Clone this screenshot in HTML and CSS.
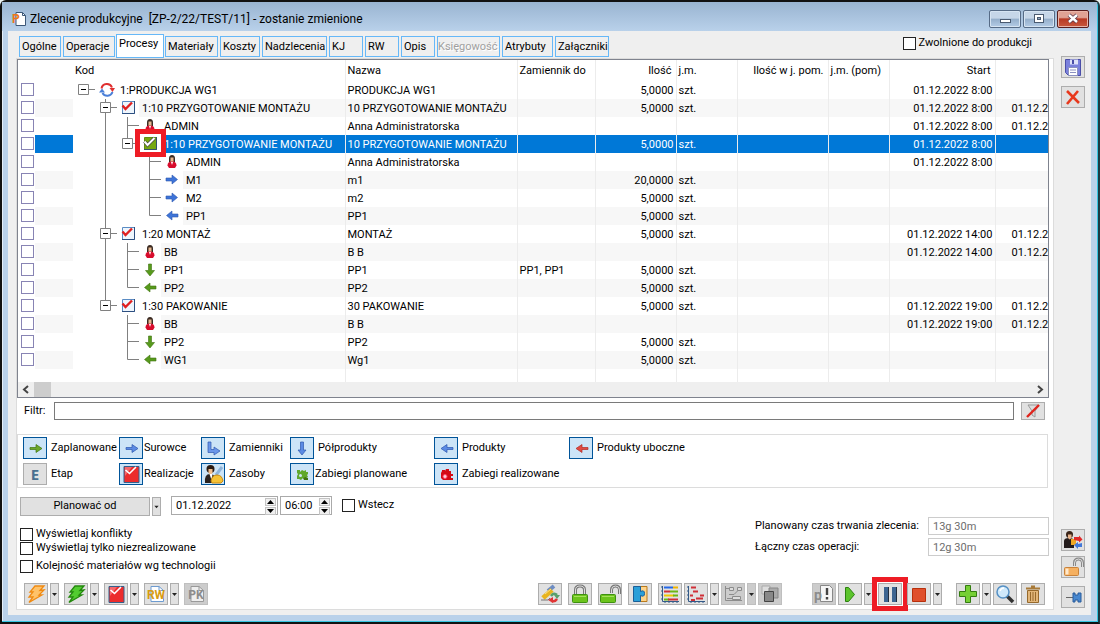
FILE: index.html
```html
<!DOCTYPE html>
<html lang="pl">
<head>
<meta charset="utf-8">
<title>Zlecenie produkcyjne</title>
<link rel="stylesheet" href="styles.css">
</head>
<body>
<svg class="sprite" aria-hidden="true">
  <!-- tree connectors -->
  <symbol id="t-v" viewBox="0 0 22 18"><path d="M10.5 0V18" stroke="#808080" fill="none"/></symbol>
  <symbol id="t-tee" viewBox="0 0 22 18"><path d="M10.5 0V18M10.5 8.5H22" stroke="#808080" fill="none"/></symbol>
  <symbol id="t-end" viewBox="0 0 22 18"><path d="M10.5 0V8.5H22" stroke="#808080" fill="none"/></symbol>
  <symbol id="t-root" viewBox="0 0 22 18"><path d="M10 8.5H22" stroke="#808080"/><path d="M5.500 3.500h10v10h-10z" fill="#fff" stroke="#808080"/><path d="M8 8.500h5" stroke="#000"/></symbol>
  <symbol id="t-mid" viewBox="0 0 22 18"><path d="M10.5 0V18M10 8.5H22" stroke="#808080"/><path d="M5.500 3.500h10v10h-10z" fill="#fff" stroke="#808080"/><path d="M8 8.500h5" stroke="#000"/></symbol>
  <symbol id="t-last" viewBox="0 0 22 18"><path d="M10.5 0V8M10 8.5H22" stroke="#808080"/><path d="M5.500 3.500h10v10h-10z" fill="#fff" stroke="#808080"/><path d="M8 8.500h5" stroke="#000"/></symbol>
  <!-- row icons -->
  <symbol id="r-cycle" viewBox="0 0 22 18"><path d="M6.500 7.500A5.500 5.500 0 0 1 17 6.500" stroke="#e03030" stroke-width="2" fill="none"/><path d="M14.500 7h5.500l-2.500 4z" fill="#e03030"/><path d="M17.500 11A5.500 5.500 0 0 1 7.500 12" stroke="#4a7fd8" stroke-width="2" fill="none"/><path d="M4 11.500h6L7 7.500z" fill="#4a7fd8"/></symbol>
  <symbol id="r-task" viewBox="0 0 22 18"><path d="M5.500 2.500h12v12h-12z" fill="#eef6fd" stroke="#5b8cc4"/><path d="M5 14.500h12.500V2" stroke="#2d4f80" fill="none"/><path d="M5.500 6.500l3 3.500 6.500-6.500" stroke="#e02020" stroke-width="2.400" fill="none"/></symbol>
  <symbol id="r-done" viewBox="0 0 22 18"><path d="M5.500 2.500h12v12h-12z" fill="#76a810" stroke="#5f8d10"/><path d="M5 14.500h12.500V2" stroke="#35506e" fill="none"/><path d="M5.500 6.500l3 3.500 7-7" stroke="#444" stroke-width="3.400" fill="none"/><path d="M5.500 6.500l3 3.500 7-7" stroke="#fff" stroke-width="2" fill="none"/></symbol>
  <symbol id="r-user" viewBox="0 0 22 18"><path d="M8 9V5.500q0-3.500 3-3.500t3 3.500V9z" fill="#3a2a22"/><path d="M9.500 4.500h3V9h-3z" fill="#e8b890"/><path d="M6.500 12.500q0-4 4.500-4t4.500 4L14 15H8z" fill="#d80c2c"/><path d="M10 9h2l-1 3z" fill="#fff"/></symbol>
  <symbol id="r-right" viewBox="0 0 22 18"><path d="M5 7h6V4l5.500 4.500L11 13v-3H5z" fill="#3e74d8" stroke="#2d57ae" stroke-width=".6"/></symbol>
  <symbol id="r-left" viewBox="0 0 22 18"><path d="M17 7h-6V4L5.500 8.500 11 13v-3h6z" fill="#3e74d8" stroke="#2d57ae" stroke-width=".6"/></symbol>
  <symbol id="g-left" viewBox="0 0 22 18"><path d="M17 7h-6V4L5.500 8.500 11 13v-3h6z" fill="#579a1c" stroke="#3f7410" stroke-width=".6"/></symbol>
  <symbol id="g-down" viewBox="0 0 22 18"><path d="M9.500 3v6.500H6.500L11 15l4.500-5.500h-3V3z" fill="#579a1c" stroke="#3f7410" stroke-width=".6"/></symbol>
  <!-- legend icons -->
  <symbol id="l-right-g" viewBox="0 0 22 20"><path d="M6 9.500h6v-3l6 4-6 4v-3H6z" fill="#6aa82c" stroke="#3f7410" stroke-width=".7"/></symbol>
  <symbol id="l-right" viewBox="0 0 22 20"><path d="M6 9.500h6v-3l6 4-6 4v-3H6z" fill="#5a8ae4" stroke="#2d57ae" stroke-width=".7"/></symbol>
  <symbol id="l-turn" viewBox="0 0 22 20"><path d="M6 4h3v7.500h3V9l6 4-6 4v-2.500H6z" fill="#6a96ea" stroke="#2d57ae" stroke-width=".7"/></symbol>
  <symbol id="l-down" viewBox="0 0 22 20"><path d="M9.500 4v8H7l4 5 4-5h-2.500V4z" fill="#5a8ae4" stroke="#2d57ae" stroke-width=".7"/></symbol>
  <symbol id="l-left" viewBox="0 0 22 20"><path d="M18 9.500h-6v-3l-6 4 6 4v-3h6z" fill="#5a8ae4" stroke="#2d57ae" stroke-width=".7"/></symbol>
  <symbol id="l-left-r" viewBox="0 0 22 20"><path d="M18 9.500h-6v-3l-6 4 6 4v-3h6z" fill="#e04a42" stroke="#b02a24" stroke-width=".7"/></symbol>
  <symbol id="l-gear-g" viewBox="0 0 22 20"><path d="M6 6h3v2l2-2 2 1 2-1v2h2v2l-1 1 1 2h-2v2l-3-1-2 2-2-1H6v-3l1-2-1-1z" fill="#5fa82c"/><circle cx="9.500" cy="11.500" r="1.500" fill="#cfe5f7"/><path d="M12 14l3-1 2 1v2h-4z" fill="#3f7410"/></symbol>
  <symbol id="l-gear-r" viewBox="0 0 22 20"><path d="M7 7V6h3v1l1-2h3v2h2v3h2v2h-2v2h2v2H8l-2-2V9z" fill="#d40a14"/><circle cx="10" cy="12.500" r="2" fill="#fbd3da" stroke="#ff4468"/></symbol>
  <symbol id="l-hat" viewBox="0 0 22 20"><path d="M3 19q-1-9 5-9t7 9z" fill="#2b2320"/><circle cx="8.500" cy="5" r="4" fill="#2b1c14"/><path d="M6.500 5h4v4l-2 2-2-2z" fill="#f0bd8c"/><path d="M7.500 10h3l-1 6z" fill="#fff"/><path d="M20 3l-6 8" stroke="#8fb4da" stroke-width="3"/><path d="M9 17q1-6 6-6t6 6l-2 2h-9z" fill="#f5c236" stroke="#c98a10"/></symbol>
  <symbol id="i-redcheck" viewBox="0 0 22 20"><path d="M4 2.500h15v16H4z" fill="#ec2c2c" stroke="#34608c"/><path d="M5 3h7L5 12z" fill="#f5686c"/><path d="M5.500 6l4 3.500L16 3" stroke="#fff" stroke-width="1.600" fill="none"/></symbol>
  <!-- toolbar icons -->
  <symbol id="i-bolt-o" viewBox="0 0 22 20"><path d="M10 2h9l-4 4.500 4-.500-5 5h3L4 18.500l4-5.500H4l4-5H5z" fill="#ffc36a" stroke="#f08a12" stroke-width="1.300"/></symbol>
  <symbol id="i-bolt-g" viewBox="0 0 22 20"><path d="M10 2h9l-4 4.500 4-.500-5 5h3L4 18.500l4-5.500H4l4-5H5z" fill="#52cc30" stroke="#24880e" stroke-width="1.300"/></symbol>
  <symbol id="i-sheet" viewBox="0 0 22 20"><path d="M6 2.500h8l4.500 4v11H6z" fill="#fff" stroke="#6d9bd0"/><path d="M14 2.500v4h4.500" fill="none" stroke="#6d9bd0"/></symbol>
  <symbol id="i-sheet-off" viewBox="0 0 22 20"><path d="M6 2.500h8l4.500 4v11H6z" fill="#eee" stroke="#999"/><path d="M14 2.500v4h4.500" fill="none" stroke="#999"/></symbol>
  <symbol id="i-sync" viewBox="0 0 22 20"><path d="M9 7l6-5" stroke="#6d8cc2" stroke-width="4"/><path d="M4 14l9-8" stroke="#e8b41e" stroke-width="5"/><path d="M6 10l6-5" stroke="#fbe08a"/><path d="M2 16h7l2-2" stroke="#777" fill="none"/><path d="M12 12q3-4 6-1" stroke="#5aa06c" stroke-width="2.500" fill="none"/><path d="M15 11h6l-3 4z" fill="#5aa06c"/><path d="M18 15q-2 3-5 2" stroke="#e03434" stroke-width="2.500" fill="none"/><path d="M14 13v6l-5-3z" fill="#e03434"/></symbol>
  <symbol id="i-lock" viewBox="0 0 22 20"><path d="M6.500 11V6q0-4 4.500-4t4.500 4v5" fill="none" stroke="#777" stroke-width="3"/><path d="M6.500 11V6q0-4 4.500-4t4.500 4v5" fill="none" stroke="#ddd"/><rect x="3.500" y="10.500" width="15" height="8" rx="1" fill="#6cc41c" stroke="#3e9010"/><path d="M5 12.500h12" stroke="#a4e05c"/></symbol>
  <symbol id="i-unlock" viewBox="0 0 22 20"><path d="M12.500 9V6q0-4 4-4t4 4v4" fill="none" stroke="#777" stroke-width="3"/><path d="M12.500 9V6q0-4 4-4t4 4v4" fill="none" stroke="#ddd"/><rect x="1.500" y="10.500" width="15" height="8" rx="1" fill="#6cc41c" stroke="#3e9010"/><path d="M3 12.500h12" stroke="#a4e05c"/></symbol>
  <symbol id="i-unlock-o" viewBox="0 0 22 20"><path d="M12.500 9V6q0-4 4-4t4 4v4" fill="none" stroke="#888" stroke-width="3"/><path d="M12.500 9V6q0-4 4-4t4 4v4" fill="none" stroke="#ddd"/><rect x="2.500" y="10.500" width="14" height="8" rx="1" fill="#f5b060" stroke="#c9823a"/><path d="M5 11.500v6" stroke="#ffe9cc" stroke-width="3"/></symbol>
  <symbol id="i-puzzle" viewBox="0 0 22 20"><path d="M11 2.500h7v15h-7z" fill="#ffd48a" stroke="#b8791c"/><path d="M4.500 2.500h7v5q4-2 4 2t-4 2v6h-7z" fill="#2a9fd8" stroke="#1a5f98"/></symbol>
  <symbol id="i-gantt" viewBox="0 0 22 20"><path d="M3.500 2v15.500H20" stroke="#345a88" fill="none"/><path d="M5 3.500h9" stroke="#2468e8" stroke-width="2"/><path d="M14 3.500h5" stroke="#f0b400" stroke-width="2"/><path d="M5 7.500h6" stroke="#d03038" stroke-width="2"/><path d="M11 7.500h8" stroke="#6cb814" stroke-width="2"/><path d="M5 11.500h10" stroke="#f0c800" stroke-width="2"/><path d="M14 11.500h5" stroke="#6cb814" stroke-width="2"/><path d="M5 15.500h5" stroke="#6cb814" stroke-width="2"/><path d="M9 15.500h10" stroke="#d03038" stroke-width="2"/><path d="M2 3h2M2 7h2M2 11h2M2 15h2M6 19v-2M10 19v-2M14 19v-2M18 19v-2" stroke="#345a88"/></symbol>
  <symbol id="i-scatter" viewBox="0 0 22 20"><path d="M3.500 2v15.500H20M2 3h2M2 7h2M2 11h2M2 15h2M6 19v-2M10 19v-2M14 19v-2M18 19v-2" stroke="#345a88" fill="none"/><path d="M6 3.500h5M8 7.500h5M15 11.500h4M5 11.500h3M11 14.500h7M6 16h4" stroke="#d03038" stroke-width="2"/></symbol>
  <symbol id="i-graph" viewBox="0 0 22 20"><path d="M3.500 2v14.500H20" stroke="#8c8c8c" fill="none"/><path d="M4 4.500h3M7 10.500h5l5-5M5 14.500h5" stroke="#8c8c8c" fill="none"/><path d="M7.500 3.500h4v3h-4zM15.500 3.500h4v3h-4zM10.500 12.500h8v3h-8z" fill="#ddd" stroke="#8c8c8c"/></symbol>
  <symbol id="i-stack" viewBox="0 0 22 20"><path d="M3 2h8v8H3z" fill="#ddd" stroke="#aaa"/><path d="M10 4h9v10h-9z" fill="#aaa" stroke="#888"/><path d="M5.500 7.500h9v10h-9z" fill="#888" stroke="#444"/></symbol>
  <symbol id="i-note" viewBox="0 0 22 20"><path d="M7.500 1.500h9l3 3v13h-12z" fill="#f6f6f6" stroke="#888"/><path d="M14 4v7M14 13v2.500" stroke="#444" stroke-width="2.400"/></symbol>
  <symbol id="i-play" viewBox="0 0 22 20"><path d="M6.500 3.500h3l6 7-6 7h-3z" fill="#5cc42c" stroke="#2c8010"/></symbol>
  <symbol id="i-pause" viewBox="0 0 22 20"><path d="M5 3h4v15H5zM13 3h4v15h-4z" fill="#3d6591"/><path d="M9.500 3v15M17.500 3v15" stroke="#222f40"/></symbol>
  <symbol id="i-stop" viewBox="0 0 22 20"><path d="M4.500 4.500h13v13h-13z" fill="#e0502c" stroke="#b8300c"/></symbol>
  <symbol id="i-plus" viewBox="0 0 22 20"><path d="M8.500 1.500h5v6h6v5h-6v6h-5v-6h-6v-5h6z" fill="#76cf35" stroke="#347c10"/></symbol>
  <symbol id="i-find" viewBox="0 0 22 20"><path d="M13 12l6 6" stroke="#333" stroke-width="3.500"/><circle cx="9" cy="8" r="6" fill="#cfe9fb" stroke="#5590c4" stroke-width="1.500"/><path d="M6 7q1-3 4-3" stroke="#fff" stroke-width="1.500" fill="none"/></symbol>
  <symbol id="i-bin" viewBox="0 0 22 20"><path d="M5.500 6.500h11v12h-11z" fill="#e2b67a" stroke="#96692c"/><path d="M4 4.500h14M9 2.500h4" stroke="#a87a38" stroke-width="2"/><path d="M8.500 8v9M11 8v9M13.500 8v9" stroke="#96692c"/></symbol>
  <symbol id="i-save" viewBox="0 0 22 20"><path d="M3.500 2.500h15v16h-12l-3-3z" fill="#7a80dc" stroke="#4a4ea8"/><path d="M8 2.500h8v5H8z" fill="#dfe2f8"/><path d="M10 3h2v4h-2z" fill="#4a4ea8"/><path d="M6.500 10.500h9v8h-9z" fill="#fff" stroke="#8a90c0"/><path d="M8 13h6M8 15.500h6" stroke="#8a90c0"/></symbol>
  <symbol id="i-cross" viewBox="0 0 22 20"><path d="M5 4L17 16M16 4L5 17" stroke="#e8381c" stroke-width="2.600"/></symbol>
  <symbol id="i-people" viewBox="0 0 22 20"><path d="M2 18V11q0-3 5-3t5 3v7z" fill="#241c1c"/><circle cx="7.500" cy="4.500" r="3.500" fill="#3a2418"/><path d="M6 4.500h3.500V8L7.500 9.500 6 8z" fill="#eab58c"/><path d="M9 9h5v6H9z" fill="#f0a824"/><path d="M12 10V7h5V5.500l3.500 4-3.500 3V11z" fill="#e02828"/><path d="M20 13v4h-4v2l-4-4 4-3v2z" fill="#4278d8"/></symbol>
  <symbol id="i-pin" viewBox="0 0 22 20"><path d="M4 10.500h8" stroke="#666"/><path d="M11 6h2v2h3V6h3v9h-3v-2h-3v2h-2z" fill="#4888d0" stroke="#285c9c"/></symbol>
  <symbol id="i-funnel" viewBox="0 0 22 16"><path d="M6 2h11l-4 6v6l-3-2V8z" fill="#ddd" stroke="#999"/><path d="M5 14L17 2" stroke="#e0241c" stroke-width="2.400"/></symbol>
  <symbol id="i-caret" viewBox="0 0 7 20"><path d="M1 9h5L3.500 12z" fill="#222"/></symbol>
  <symbol id="i-app" viewBox="0 0 14 14"><path d="M4 .500h6.500l3 3v10H4z" fill="#fff" stroke="#3d5878"/><path d="M10.500.500v3h3" fill="none" stroke="#3d5878"/></symbol>
</svg>

<div class="window">
  <header class="titlebar">
    <span class="app-icon"><svg><use href="#i-app"/></svg><b>P</b></span>
    <h1>Zlecenie produkcyjne&nbsp; [ZP-2/22/TEST/11] - zostanie zmienione</h1>
    <div class="caption">
      <button aria-label="Minimalizuj"><svg viewBox="0 0 12 12"><rect x="1.500" y="6.500" width="10" height="3" fill="#fff" stroke="#4a5a70"/></svg></button>
      <button aria-label="Maksymalizuj"><svg viewBox="0 0 12 12"><rect x="1.500" y="1.500" width="9" height="8" fill="#fff" stroke="#4a5a70"/><rect x="4.500" y="4.500" width="3" height="2" fill="#8fa8c4" stroke="#4a5a70"/></svg></button>
      <button class="close" aria-label="Zamknij"><svg viewBox="0 0 12 12"><path d="M2 2l8 7M10 2L2 9" stroke="#59384a" stroke-width="4"/><path d="M2 2l8 7M10 2L2 9" stroke="#fff" stroke-width="2.400"/></svg></button>
    </div>
  </header>

  <div class="client">
    <main>
      <div class="tabrow">
        <nav class="tabs">
          <button>Ogólne</button><button>Operacje</button><button class="active">Procesy</button><button>Materiały</button><button>Koszty</button><button>Nadzlecenia</button><button>KJ</button><button>RW</button><button>Opis</button><button disabled>Księgowość</button><button>Atrybuty</button><button>Załączniki</button>
        </nav>
        <label class="check"><input type="checkbox"><span>Zwolnione do produkcji</span></label>
      </div>

      <section class="panel">
        <div class="grid">
          <table>
            <colgroup><col class="c-check"><col class="c-flag"><col class="c-code"><col class="c-name"><col class="c-sub"><col class="c-qty"><col class="c-unit"><col class="c-qty2"><col class="c-unit2"><col class="c-start"><col></colgroup>
            <thead><tr><th></th><th></th><th class="code">Kod</th><th>Nazwa</th><th>Zamiennik do</th><th class="num">Ilość</th><th>j.m.</th><th class="num">Ilość w j. pom.</th><th>j.m. (pom)</th><th class="num">Start</th><th class="end"></th></tr></thead>
            <tbody>
              <tr><td><input type="checkbox" aria-label="Wiersz 1"></td><td></td><td><div class="node"><svg><use href="#t-root"/></svg><svg><use href="#r-cycle"/></svg><span>1:PRODUKCJA WG1</span></div></td><td>PRODUKCJA WG1</td><td></td><td class="num">5,0000</td><td>szt.</td><td></td><td></td><td class="num">01.12.2022 8:00</td><td class="end"></td></tr>
              <tr><td><input type="checkbox" aria-label="Wiersz 2"></td><td></td><td><div class="node"><i></i><svg><use href="#t-mid"/></svg><svg><use href="#r-task"/></svg><span>1:10 PRZYGOTOWANIE MONTAŻU</span></div></td><td>10 PRZYGOTOWANIE MONTAŻU</td><td></td><td class="num">5,0000</td><td>szt.</td><td></td><td></td><td class="num">01.12.2022 8:00</td><td class="end">01.12.2022</td></tr>
              <tr><td><input type="checkbox" aria-label="Wiersz 3"></td><td></td><td><div class="node"><i></i><svg><use href="#t-v"/></svg><svg><use href="#t-tee"/></svg><svg><use href="#r-user"/></svg><span>ADMIN</span></div></td><td>Anna Administratorska</td><td></td><td></td><td></td><td></td><td></td><td class="num">01.12.2022 8:00</td><td class="end">01.12.2022</td></tr>
              <tr class="selected"><td><input type="checkbox" aria-label="Wiersz 4"></td><td></td><td><div class="node"><i></i><svg><use href="#t-v"/></svg><svg><use href="#t-last"/></svg><b class="marked"><svg><use href="#r-done"/></svg></b><span>1:10 PRZYGOTOWANIE MONTAŻU</span></div></td><td>10 PRZYGOTOWANIE MONTAŻU</td><td></td><td class="num">5,0000</td><td>szt.</td><td></td><td></td><td class="num">01.12.2022 8:00</td><td class="end"></td></tr>
              <tr><td><input type="checkbox" aria-label="Wiersz 5"></td><td></td><td><div class="node"><i></i><svg><use href="#t-v"/></svg><i></i><svg><use href="#t-tee"/></svg><svg><use href="#r-user"/></svg><span>ADMIN</span></div></td><td>Anna Administratorska</td><td></td><td></td><td></td><td></td><td></td><td class="num">01.12.2022 8:00</td><td class="end"></td></tr>
              <tr><td><input type="checkbox" aria-label="Wiersz 6"></td><td></td><td><div class="node"><i></i><svg><use href="#t-v"/></svg><i></i><svg><use href="#t-tee"/></svg><svg><use href="#r-right"/></svg><span>M1</span></div></td><td>m1</td><td></td><td class="num">20,0000</td><td>szt.</td><td></td><td></td><td></td><td class="end"></td></tr>
              <tr><td><input type="checkbox" aria-label="Wiersz 7"></td><td></td><td><div class="node"><i></i><svg><use href="#t-v"/></svg><i></i><svg><use href="#t-tee"/></svg><svg><use href="#r-right"/></svg><span>M2</span></div></td><td>m2</td><td></td><td class="num">5,0000</td><td>szt.</td><td></td><td></td><td></td><td class="end"></td></tr>
              <tr><td><input type="checkbox" aria-label="Wiersz 8"></td><td></td><td><div class="node"><i></i><svg><use href="#t-v"/></svg><i></i><svg><use href="#t-end"/></svg><svg><use href="#r-left"/></svg><span>PP1</span></div></td><td>PP1</td><td></td><td class="num">5,0000</td><td>szt.</td><td></td><td></td><td></td><td class="end"></td></tr>
              <tr><td><input type="checkbox" aria-label="Wiersz 9"></td><td></td><td><div class="node"><i></i><svg><use href="#t-mid"/></svg><svg><use href="#r-task"/></svg><span>1:20 MONTAŻ</span></div></td><td>MONTAŻ</td><td></td><td class="num">5,0000</td><td>szt.</td><td></td><td></td><td class="num">01.12.2022 14:00</td><td class="end">01.12.2022</td></tr>
              <tr><td><input type="checkbox" aria-label="Wiersz 10"></td><td></td><td><div class="node"><i></i><svg><use href="#t-v"/></svg><svg><use href="#t-tee"/></svg><svg><use href="#r-user"/></svg><span>BB</span></div></td><td>B B</td><td></td><td></td><td></td><td></td><td></td><td class="num">01.12.2022 14:00</td><td class="end">01.12.2022</td></tr>
              <tr><td><input type="checkbox" aria-label="Wiersz 11"></td><td></td><td><div class="node"><i></i><svg><use href="#t-v"/></svg><svg><use href="#t-tee"/></svg><svg><use href="#g-down"/></svg><span>PP1</span></div></td><td>PP1</td><td>PP1, PP1</td><td class="num">5,0000</td><td>szt.</td><td></td><td></td><td></td><td class="end"></td></tr>
              <tr><td><input type="checkbox" aria-label="Wiersz 12"></td><td></td><td><div class="node"><i></i><svg><use href="#t-v"/></svg><svg><use href="#t-end"/></svg><svg><use href="#g-left"/></svg><span>PP2</span></div></td><td>PP2</td><td></td><td class="num">5,0000</td><td>szt.</td><td></td><td></td><td></td><td class="end"></td></tr>
              <tr><td><input type="checkbox" aria-label="Wiersz 13"></td><td></td><td><div class="node"><i></i><svg><use href="#t-last"/></svg><svg><use href="#r-task"/></svg><span>1:30 PAKOWANIE</span></div></td><td>30 PAKOWANIE</td><td></td><td class="num">5,0000</td><td>szt.</td><td></td><td></td><td class="num">01.12.2022 19:00</td><td class="end">01.12.2022</td></tr>
              <tr><td><input type="checkbox" aria-label="Wiersz 14"></td><td></td><td><div class="node"><i></i><i></i><svg><use href="#t-tee"/></svg><svg><use href="#r-user"/></svg><span>BB</span></div></td><td>B B</td><td></td><td></td><td></td><td></td><td></td><td class="num">01.12.2022 19:00</td><td class="end">01.12.2022</td></tr>
              <tr><td><input type="checkbox" aria-label="Wiersz 15"></td><td></td><td><div class="node"><i></i><i></i><svg><use href="#t-tee"/></svg><svg><use href="#g-down"/></svg><span>PP2</span></div></td><td>PP2</td><td></td><td class="num">5,0000</td><td>szt.</td><td></td><td></td><td></td><td class="end"></td></tr>
              <tr><td><input type="checkbox" aria-label="Wiersz 16"></td><td></td><td><div class="node"><i></i><i></i><svg><use href="#t-end"/></svg><svg><use href="#g-left"/></svg><span>WG1</span></div></td><td>Wg1</td><td></td><td class="num">5,0000</td><td>szt.</td><td></td><td></td><td></td><td class="end"></td></tr>
              <tr class="filler"><td></td><td></td><td></td><td></td><td></td><td></td><td></td><td></td><td></td><td></td><td class="end"></td></tr>
            </tbody>
          </table>
          <div class="scroll">
            <svg viewBox="0 0 16 15"><path d="M10 4L6 7.500 10 11" fill="none" stroke="#444" stroke-width="2"/></svg>
            <div class="thumb"></div>
            <svg class="next" viewBox="0 0 16 15"><path d="M6 4l4 3.500L6 11" fill="none" stroke="#444" stroke-width="2"/></svg>
          </div>
        </div>

        <div class="filter">
          <label for="filter">Filtr:</label>
          <input id="filter" type="text">
          <button class="tool short" aria-label="Wyczyść filtr"><svg><use href="#i-funnel"/></svg></button>
        </div>

        <div class="legend">
          <div><button class="tool on" aria-labelledby="n1"><svg><use href="#l-right-g"/></svg></button><span id="n1">Zaplanowane</span></div>
          <div class="tight"><button class="tool on" aria-labelledby="n2"><svg><use href="#l-right"/></svg></button><span id="n2">Surowce</span></div>
          <div><button class="tool on" aria-labelledby="n3"><svg><use href="#l-turn"/></svg></button><span id="n3">Zamienniki</span></div>
          <div><button class="tool on" aria-labelledby="n4"><svg><use href="#l-down"/></svg></button><span id="n4">Półprodukty</span></div>
          <div><button class="tool on" aria-labelledby="n5"><svg><use href="#l-left"/></svg></button><span id="n5">Produkty</span></div>
          <div><button class="tool on" aria-labelledby="n6"><svg><use href="#l-left-r"/></svg></button><span id="n6">Produkty uboczne</span></div>
          <div><button class="tool letter" aria-labelledby="n7">E</button><span id="n7">Etap</span></div>
          <div class="tight"><button class="tool on" aria-labelledby="n8"><svg><use href="#i-redcheck"/></svg></button><span id="n8">Realizacje</span></div>
          <div><button class="tool on" aria-labelledby="n9"><svg><use href="#l-hat"/></svg></button><span id="n9">Zasoby</span></div>
          <div class="tight"><button class="tool on" aria-labelledby="n10"><svg><use href="#l-gear-g"/></svg></button><span id="n10">Zabiegi planowane</span></div>
          <div><button class="tool on" aria-labelledby="n11"><svg><use href="#l-gear-r"/></svg></button><span id="n11">Zabiegi realizowane</span></div>
        </div>

        <div class="lower">
          <div class="options">
            <div class="plan">
              <button class="wide">Planować od</button>
              <button class="drop low" aria-label="Opcje planowania"><svg><use href="#i-caret"/></svg></button>
              <div class="spin date"><input type="text" value="01.12.2022" aria-label="Data"><div><button aria-label="Data w górę"><svg viewBox="0 0 9 6"><path d="M1 5h7L4.500 1z"/></svg></button><button aria-label="Data w dół"><svg viewBox="0 0 9 6"><path d="M1 1h7L4.500 5z"/></svg></button></div></div>
              <div class="spin time"><input type="text" value="06:00" aria-label="Godzina"><div><button aria-label="Godzina w górę"><svg viewBox="0 0 9 6"><path d="M1 5h7L4.500 1z"/></svg></button><button aria-label="Godzina w dół"><svg viewBox="0 0 9 6"><path d="M1 1h7L4.500 5z"/></svg></button></div></div>
              <label class="check"><input type="checkbox"><span>Wstecz</span></label>
            </div>
            <label class="check"><input type="checkbox"><span>Wyświetlaj konflikty</span></label>
            <label class="check"><input type="checkbox"><span>Wyświetlaj tylko niezrealizowane</span></label>
            <label class="check spaced"><input type="checkbox"><span>Kolejność materiałów wg technologii</span></label>
          </div>
          <div class="times">
            <label for="planned">Planowany czas trwania zlecenia:</label><input id="planned" type="text" value="13g 30m" readonly>
            <label for="total">Łączny czas operacji:</label><input id="total" type="text" value="12g 30m" readonly>
          </div>
        </div>

        <footer class="toolbar">
          <div class="group left">
            <div><button class="tool" aria-label="Generuj"><svg><use href="#i-bolt-o"/></svg></button><button class="drop" aria-label="Więcej"><svg><use href="#i-caret"/></svg></button></div>
            <div><button class="tool" aria-label="Generuj operacje"><svg><use href="#i-bolt-g"/></svg></button><button class="drop" aria-label="Więcej"><svg><use href="#i-caret"/></svg></button></div>
            <div><button class="tool" aria-label="Realizacja"><svg><use href="#i-redcheck"/></svg></button><button class="drop" aria-label="Więcej"><svg><use href="#i-caret"/></svg></button></div>
            <div><button class="tool text rw"><svg><use href="#i-sheet"/></svg><b>RW</b></button><button class="drop" aria-label="Więcej"><svg><use href="#i-caret"/></svg></button></div>
            <div><button class="tool text off" disabled><svg><use href="#i-sheet-off"/></svg><b>PK</b></button></div>
          </div>
          <div class="group">
            <div><button class="tool" aria-label="Aktualizuj"><svg><use href="#i-sync"/></svg></button></div>
            <div><button class="tool" aria-label="Zablokuj"><svg><use href="#i-lock"/></svg></button></div>
            <div><button class="tool" aria-label="Odblokuj"><svg><use href="#i-unlock"/></svg></button></div>
            <div><button class="tool" aria-label="Moduły"><svg><use href="#i-puzzle"/></svg></button></div>
            <div><button class="tool" aria-label="Wykres Gantta"><svg><use href="#i-gantt"/></svg></button><button class="tool" aria-label="Plan"><svg><use href="#i-scatter"/></svg></button><button class="drop" aria-label="Więcej"><svg><use href="#i-caret"/></svg></button><button class="tool off" disabled aria-label="Schemat"><svg><use href="#i-graph"/></svg></button><button class="drop off" disabled aria-label="Więcej"><svg><use href="#i-caret"/></svg></button><button class="tool off" disabled aria-label="Kopiuj"><svg><use href="#i-stack"/></svg></button></div>
          </div>
          <div class="group run">
            <div><button class="tool text off" disabled><svg><use href="#i-note"/></svg><b class="p">p</b></button><button class="tool" aria-label="Uruchom"><svg><use href="#i-play"/></svg></button><button class="drop" aria-label="Więcej"><svg><use href="#i-caret"/></svg></button></div>
            <div class="marked"><button class="tool" aria-label="Wstrzymaj"><svg><use href="#i-pause"/></svg></button></div>
            <div><button class="tool" aria-label="Zakończ"><svg><use href="#i-stop"/></svg></button><button class="drop" aria-label="Więcej"><svg><use href="#i-caret"/></svg></button></div>
          </div>
          <div class="group edit">
            <div><button class="tool" aria-label="Dodaj"><svg><use href="#i-plus"/></svg></button><button class="drop" aria-label="Więcej"><svg><use href="#i-caret"/></svg></button><button class="tool" aria-label="Podgląd"><svg><use href="#i-find"/></svg></button></div>
            <div><button class="tool" aria-label="Usuń"><svg><use href="#i-bin"/></svg></button></div>
          </div>
        </footer>
      </section>
    </main>

    <aside>
      <button class="tool" aria-label="Zapisz"><svg><use href="#i-save"/></svg></button>
      <button class="tool" aria-label="Anuluj"><svg><use href="#i-cross"/></svg></button>
      <button class="tool push" aria-label="Operator"><svg><use href="#i-people"/></svg></button>
      <button class="tool near" aria-label="Odblokuj zlecenie"><svg><use href="#i-unlock-o"/></svg></button>
      <button class="tool" aria-label="Przypnij"><svg><use href="#i-pin"/></svg></button>
    </aside>
  </div>
</div>
</body>
</html>
```
FILE: styles.css
```css
* { box-sizing: border-box; }

body {
  margin: 0;
  background: #eef4f4;
  color: #000;
  font: 11px/14px Roboto, "Noto Sans", sans-serif;
}

button, input { font: inherit; color: inherit; margin: 0; padding: 0; }
svg { display: block; flex: none; }
.sprite { position: absolute; width: 0; height: 0; }

.window {
  display: flex;
  flex-direction: column;
  min-height: 100vh;
  padding: 0 7px 7px 6px;
  border: 2px solid #111;
  border-right-color: #1a3a44;
  border-radius: 6px 6px 0 0;
  background: #b9d1ea;
  box-shadow: inset -1px -1px #35c4e0, inset 1px 0 #e4eef8;
}

.titlebar {
  display: flex;
  align-items: center;
  height: 29px;
  margin: 0 -6px 0 -6px;
  padding: 4px 8px 0 10px;
  background: linear-gradient(#99b4d1, #b9d1ea);
}
.titlebar h1 { flex: 1; margin: 0 0 0 3px; font-weight: normal; font-size: 12px; line-height: 16px; }
.app-icon { position: relative; width: 15px; height: 14px; }
.app-icon svg { width: 14px; height: 14px; }
.app-icon b { position: absolute; left: 0; top: 1px; color: #f07818; font-size: 12px; line-height: 12px; }
.caption { display: flex; gap: 2px; }
.caption button {
  display: grid;
  place-items: center;
  width: 32px;
  height: 18px;
  border: 1px solid #566b86;
  border-radius: 2px;
  background: linear-gradient(#c6d6e8 45%, #94aeca 50%, #b4cce6);
  box-shadow: inset 0 0 0 1px #d6e4f2;
}
.caption svg { width: 12px; height: 12px; }
.caption .close {
  border-color: #5a1e1e;
  background: linear-gradient(#e0a294 40%, #b83a24 50%, #c8583e);
  box-shadow: inset 0 0 0 1px #e8b4a8;
}

.client { display: flex; flex: 1; background: #efefef; }
main { display: flex; flex-direction: column; flex: 1; min-width: 0; padding: 3px 0 5px 8px; }

.tabrow { display: flex; align-items: flex-end; justify-content: space-between; height: 24px; padding: 0 22px 0 3px; }
.tabs {
  display: grid;
  grid-template-columns: 42px 52px 46px 53px 40px 65px 34px 34px 34px 63px 51px 54px;
  align-items: end;
  gap: 2px;
}
.tabs button {
  height: 21px;
  margin-bottom: 1px;
  padding: 0 1px 0 2px;
  border: 1px solid #66b8f8;
  background: #efefef;
  text-align: left;
  white-space: nowrap;
}
.tabs .active { height: 24px; margin: 0 -1px; padding-bottom: 4px; background: #fff; }
.tabs button:disabled { padding: 0; color: #a0a0a0; text-shadow: 1px 1px #fff; }

.check { display: flex; align-items: center; gap: 3px; height: 14px; white-space: nowrap; }
input[type=checkbox] {
  appearance: none;
  flex: none;
  display: block;
  width: 13px;
  height: 13px;
  border: 1px solid #222;
  background: #fff;
}
.tabrow .check { height: 18px; align-self: flex-start; }

.panel { display: flex; flex-direction: column; flex: 1; border: 1px solid #dcdcdc; background: #fff; }

.grid {
  display: flex;
  flex-direction: column;
  flex: 1;
  margin-right: 4px;
  border: 1px solid #7f838e;
  overflow: hidden;
}
table { flex: 1; width: 100%; height: 322px; table-layout: fixed; border-collapse: collapse; }
.c-check { width: 17px; }
.c-flag { width: 38px; }
.c-code { width: 272px; }
.c-name { width: 172px; }
.c-sub { width: 78px; }
.c-qty { width: 81px; }
.c-unit, .c-unit2 { width: 61px; }
.c-qty2 { width: 91px; }
.c-start { width: 106px; }
th { height: 21px; padding: 0 2px; font-weight: normal; text-align: left; white-space: nowrap; }
td { height: 18px; padding: 2px 2px 0; line-height: 16px; white-space: nowrap; }
th:nth-child(n+3), td:nth-child(n+3) { border-right: 1px solid #ececec; }
th.end, td.end { padding-left: 16px; border-right: 0; overflow: hidden; }
th.num { padding-right: 4px; text-align: right; }
td.num { text-align: right; }
td:first-child { padding: 2px 0 0 3px; vertical-align: top; }
td:nth-child(3) { padding: 0; }
td input[type=checkbox] { border-color: #8884b4; }
tbody tr:nth-child(even) td:not(:first-child):not(:nth-child(3)),
tbody tr:nth-child(even) .node span { background: #f7f7f7; }
tbody .selected td:nth-child(n) { color: #fff; }
tbody tr.selected:nth-child(even) td:not(:first-child):not(:nth-child(3)),
tbody tr.selected:nth-child(even) .node span { background: #0078d7; }
.filler td { height: 13px; padding: 0; line-height: 12px; }

.node { display: flex; height: 18px; }
.node svg, .node i { flex: none; width: 22px; height: 18px; }
.node span { flex: 1; padding: 2px 0 0 3px; line-height: 16px; }

.marked { position: relative; }
.marked::after { content: ""; position: absolute; border: 5px solid #ee1c25; pointer-events: none; }
.node .marked::after { inset: -6px -5px -4px -4px; }
.toolbar .marked::after { inset: -6px; }

.scroll { display: flex; align-items: center; height: 15px; background: #efefef; }
.scroll svg { width: 16px; height: 15px; }
.scroll .thumb { width: 17px; height: 15px; background: #cdcdcd; }
.scroll .next { margin-left: auto; }

.filter { display: flex; align-items: center; height: 25px; padding: 0 8px 0 7px; }
.filter label { width: 30px; }
.filter input { flex: 1; min-width: 0; height: 18px; margin-right: 7px; border: 1px solid #7a7a7a; background: #fff; }

.tool {
  position: relative;
  display: grid;
  place-items: center;
  flex: none;
  width: 24px;
  height: 22px;
  border: 1px solid #adadad;
  background: #e1e1e1;
}
.tool svg { width: 22px; height: 20px; }
.tool.short { height: 18px; }
.tool.short svg { height: 16px; }
.tool.on { border-color: #005499; background: #cce4f7; }
.tool.off { border-color: #bfbfbf; background: #ccc; }
.letter { color: #4a7090; font: bold 15px/20px "Open Sans", sans-serif; }
.text b { position: absolute; left: 0; right: 0; top: 1px; font-size: 12px; line-height: 20px; text-align: center; }
.rw b { color: #d89c10; }
.off b { color: #8c8c8c; }
.off .p { right: 12px; font-size: 14px; }

.legend {
  display: grid;
  grid-template-columns: 96px 82px 89px 144px 135px 1fr;
  row-gap: 4px;
  margin: 11px 5px 0 0;
  padding: 2px 5px;
  border: 1px solid #dcdcdc;
  white-space: nowrap;
}
.legend div { display: flex; align-items: center; gap: 4px; }
.legend .tight { gap: 1px; }

.lower { display: flex; justify-content: space-between; padding: 8px 4px 0 3px; }
.plan { display: flex; align-items: center; height: 20px; margin-bottom: 11px; }
.wide { width: 130px; height: 19px; margin-right: 2px; border: 1px solid #adadad; background: #e1e1e1; }
.spin { display: flex; align-self: flex-start; height: 19px; padding: 1px; border: 1px solid #aaa; background: #fff; }
.spin input { flex: 1; min-width: 0; padding-left: 3px; border: 0; background: none; }
.spin div { display: flex; flex-direction: column; width: 11px; gap: 1px; }
.spin button { flex: 1; display: grid; place-items: center; border: 1px solid #c4c4c4; background: #f0f0f0; }
.spin svg { width: 9px; height: 6px; }
.plan .check { align-self: flex-start; height: 18px; }
.date { width: 107px; margin: 0 2px 0 10px; }
.time { width: 52px; margin-right: 10px; }
.spaced { margin-top: 4px; }

.times { display: grid; grid-template-columns: 173px 121px; align-content: start; align-items: center; gap: 3px 0; padding-top: 21px; }
.times input { width: 121px; height: 18px; padding-left: 4px; border: 1px solid #ccc; background: #fff; color: #6d6d6d; }

.drop { display: grid; place-items: center; width: 9px; height: 22px; border: 1px solid #adadad; background: #e1e1e1; }
.drop svg { width: 7px; height: 20px; }
.drop.low { height: 19px; }
.drop.low svg { height: 17px; }
.drop.off { border-color: #bfbfbf; background: #ccc; }

.toolbar { display: flex; align-items: center; padding: 10px 8px 4px 7px; }
.group { display: flex; gap: 6px; }
.group div { display: flex; gap: 2px; }
.group.left { gap: 5px; margin-right: auto; }
.group.run { gap: 5px; margin-left: 30px; }
.group.edit { gap: 4px; margin-left: 14px; }

aside { display: flex; flex-direction: column; align-items: center; gap: 8px; width: 37px; padding: 25px 0 7px; }
.push { margin-top: auto; }
.near { margin-top: -3px; }
```
